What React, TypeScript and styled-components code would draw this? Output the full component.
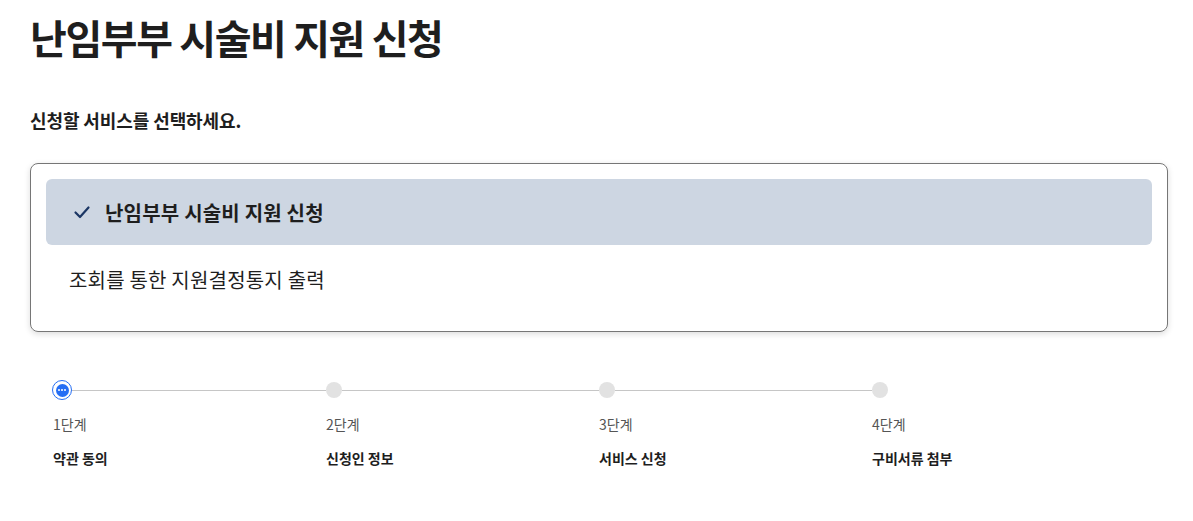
import React from "react";
import styled, { createGlobalStyle } from "styled-components";

const Global = createGlobalStyle`
  html, body { margin: 0; padding: 0; background: #fff; }
  body {
    font-family: "Noto Sans CJK KR", "Noto Sans", sans-serif;
    color: #1e1e1e;
  }
  * { box-sizing: border-box; }
`;

const Page = styled.main`
  padding: 13px 25px 0 30px;
`;

const Title = styled.h1`
  margin: 0;
  font-size: 40px;
  line-height: 48px;
  font-weight: 700;
  letter-spacing: -1.4px;
  color: #1e1e1e;
`;

const Lead = styled.p`
  margin: 47px 0 0;
  font-size: 18px;
  line-height: 24px;
  font-weight: 700;
  letter-spacing: -0.1px;
  color: #1e1e1e;
`;

const ServiceBox = styled.div`
  margin-top: 31px;
  border: 1px solid #767676;
  border-radius: 8px;
  padding: 15px 15px 18px;
  box-shadow: 0 2px 6px rgba(0, 0, 0, 0.14);
  display: flex;
  flex-direction: column;
`;

const ServiceItem = styled.div<{ $selected?: boolean }>`
  height: ${(p) => (p.$selected ? "66px" : "68px")};
  display: flex;
  align-items: center;
  gap: 13px;
  padding-left: ${(p) => (p.$selected ? "26px" : "23px")};
  border-radius: 6px;
  background: ${(p) => (p.$selected ? "#cdd6e2" : "transparent")};
  font-size: 20px;
  font-weight: ${(p) => (p.$selected ? 700 : 400)};
  color: #1e1e1e;
  letter-spacing: 0.2px;
`;

const Steps = styled.ol`
  list-style: none;
  margin: 48px 0 0;
  padding: 0 23px;
  display: grid;
  grid-template-columns: repeat(4, 1fr);
`;

const Step = styled.li`
  display: flex;
  flex-direction: column;
`;

const MarkerRow = styled.div`
  height: 20px;
  display: flex;
  align-items: center;
`;

const Dot = styled.span`
  width: 16px;
  height: 16px;
  border-radius: 50%;
  background: #e2e2e2;
  flex: none;
`;

const ActiveDot = styled.span`
  width: 20px;
  height: 20px;
  margin-left: -1px;
  border-radius: 50%;
  border: 1.5px solid #256ef4;
  background: #fff;
  display: flex;
  align-items: center;
  justify-content: center;
  flex: none;
`;

const ActiveCore = styled.span`
  width: 13px;
  height: 13px;
  border-radius: 50%;
  background: #256ef4;
  display: flex;
  align-items: center;
  justify-content: center;
  gap: 1.2px;
`;

const Pip = styled.span`
  width: 2px;
  height: 2px;
  border-radius: 50%;
  background: #fff;
`;

const Line = styled.span`
  flex: 1;
  height: 1px;
  background: #c6c6c6;
`;

const StepNum = styled.span`
  margin-top: 14px;
  font-size: 14px;
  line-height: 20px;
  color: #555;
`;

const StepName = styled.span`
  margin-top: 14px;
  font-size: 14px;
  line-height: 20px;
  font-weight: 700;
  color: #1e1e1e;
`;

const CheckIcon = () => (
  <svg width="20" height="20" viewBox="0 0 20 20" fill="none">
    <polyline
      points="3.5,10.5 8,15 16.5,5.5"
      stroke="#1b3664"
      strokeWidth="2.2"
      strokeLinecap="round"
      strokeLinejoin="round"
    />
  </svg>
);

const steps = [
  { num: "1단계", name: "약관 동의" },
  { num: "2단계", name: "신청인 정보" },
  { num: "3단계", name: "서비스 신청" },
  { num: "4단계", name: "구비서류 첨부" },
];

export default function App() {
  return (
    <>
      <Global />
      <Page>
        <Title>난임부부 시술비 지원 신청</Title>
        <Lead>신청할 서비스를 선택하세요.</Lead>
        <ServiceBox>
          <ServiceItem $selected>
            <CheckIcon />
            난임부부 시술비 지원 신청
          </ServiceItem>
          <ServiceItem>조회를 통한 지원결정통지 출력</ServiceItem>
        </ServiceBox>
        <Steps>
          {steps.map((s, i) => (
            <Step key={s.num}>
              <MarkerRow>
                {i === 0 ? (
                  <ActiveDot>
                    <ActiveCore>
                      <Pip />
                      <Pip />
                      <Pip />
                    </ActiveCore>
                  </ActiveDot>
                ) : (
                  <Dot />
                )}
                {i < steps.length - 1 && <Line />}
              </MarkerRow>
              <StepNum>{s.num}</StepNum>
              <StepName>{s.name}</StepName>
            </Step>
          ))}
        </Steps>
      </Page>
    </>
  );
}
